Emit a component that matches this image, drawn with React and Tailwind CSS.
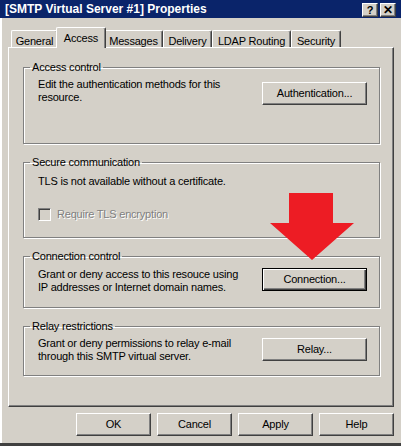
import React from 'react';

const btn3d =
  'border border-t-white border-l-white border-r-[#404040] border-b-[#404040] shadow-[inset_-1px_-1px_0_#808080] bg-[#d4d0c8]';

const tabs = [
  { label: 'General', w: 'w-[47px]' },
  { label: 'Access', w: 'w-[50px]', active: true },
  { label: 'Messages', w: 'w-[59px]' },
  { label: 'Delivery', w: 'w-[49px]' },
  { label: 'LDAP Routing', w: 'w-[79px]' },
  { label: 'Security', w: 'w-[50px]' },
];

const Group = ({ title, className, children }) => (
  <fieldset
    className={`border border-[#808080] pl-[6px] pr-[12px] shadow-[1px_1px_0_#fff,inset_1px_1px_0_#fff] ${className}`}
  >
    <legend className="px-[2px] leading-[13px]">{title}</legend>
    {children}
  </fieldset>
);

const Button = ({ children, className = '', isDefault }) => (
  <button
    className={`h-[23px] flex items-center justify-center bg-[#d4d0c8] text-black ${
      isDefault
        ? 'border border-black shadow-[inset_1px_1px_0_#fff,inset_-1px_-1px_0_#404040,inset_-2px_-2px_0_#808080]'
        : btn3d
    } ${className}`}
  >
    {children}
  </button>
);

export default function App() {
  return (
    <div className="relative w-[401px] h-[446px] bg-[#d4d0c8] flex flex-col font-['Liberation_Sans',Arial,sans-serif] text-[11px] tracking-[-0.2px] text-black overflow-hidden">
      {/* title bar */}
      <div className="h-[18px] bg-[#0a246a] flex items-center justify-between pl-[5px] pr-[5px]">
        <span className="text-white font-bold text-[12px] tracking-normal">
          [SMTP Virtual Server #1] Properties
        </span>
        <div className="flex gap-[2px] mt-[2px]">
          <span className={`w-[16px] h-[14px] flex items-center justify-center font-bold text-[11px] leading-none ${btn3d}`}>?</span>
          <span className={`w-[16px] h-[14px] flex items-center justify-center font-bold text-[12px] leading-none ${btn3d}`}>✕</span>
        </div>
      </div>

      <div className="flex-1 flex flex-col border-l-2 border-l-white">
        {/* tabs */}
        <div className="flex items-end pl-[9px] mt-[9px] h-[20px]">
          {tabs.map((t) =>
            t.active ? (
              <div
                key={t.label}
                className={`${t.w} -mx-[2px] h-[21px] -mb-[1px] relative z-10 bg-[#d4d0c8] border-t border-l border-t-white border-l-white border-r border-r-[#404040] shadow-[inset_-1px_0_0_#808080] rounded-tl-[2px] rounded-tr-[2px] flex justify-center pt-[2px]`}
              >
                {t.label}
              </div>
            ) : (
              <div
                key={t.label}
                className={`${t.w} h-[17px] border-t border-l border-t-white border-l-white border-r border-r-[#404040] shadow-[inset_-1px_0_0_#808080] rounded-tl-[2px] rounded-tr-[2px] flex justify-center pt-[2px]`}
              >
                {t.label}
              </div>
            )
          )}
        </div>

        {/* panel */}
        <div className={`ml-[6px] mr-[7px] h-[360px] flex flex-col gap-[12px] pt-[13px] pl-[14px] pr-[13px] ${btn3d}`}>
          <Group title="Access control" className="h-[83px]">
            <div className="flex justify-between items-start pl-[8px] pt-[4px]">
              <p className="leading-[13px]">
                Edit the authentication methods for this
                <br />
                resource.
              </p>
              <Button className="w-[105px] h-[22px] mt-[4px]">Authentication...</Button>
            </div>
          </Group>

          <Group title="Secure communication" className="h-[82px]">
            <div className="pl-[8px] pt-[6px] flex flex-col">
              <p className="leading-[13px]">TLS is not available without a certificate.</p>
              <label className="flex items-center gap-[6px] mt-[18px]">
                <span className="w-[13px] h-[13px] border border-t-[#808080] border-l-[#808080] border-r-white border-b-white shadow-[inset_1px_1px_0_#404040] bg-[#d4d0c8]" />
                <span className="text-[#808080] [text-shadow:1px_1px_0_#fff]">Require TLS encryption</span>
              </label>
            </div>
          </Group>

          <Group title="Connection control" className="h-[58px]">
            <div className="flex justify-between items-start pl-[8px] pt-[5px]">
              <p className="leading-[13px]">
                Grant or deny access to this resouce using
                <br />
                IP addresses or Internet domain names.
              </p>
              <Button className="w-[105px]" isDefault>
                Connection...
              </Button>
            </div>
          </Group>

          <Group title="Relay restrictions" className="h-[56px]">
            <div className="flex justify-between items-start pl-[8px] pt-[4px]">
              <p className="leading-[13px]">
                Grant or deny permissions to relay e-mail
                <br />
                through this SMTP virtual server.
              </p>
              <Button className="w-[105px] mt-[1px]">Relay...</Button>
            </div>
          </Group>
        </div>

        {/* dialog buttons */}
        <div className="flex justify-end gap-[6px] mt-[6px] pr-[7px]">
          <Button className="w-[75px]">OK</Button>
          <Button className="w-[75px]">Cancel</Button>
          <Button className="w-[75px]">Apply</Button>
          <Button className="w-[75px]">Help</Button>
        </div>
      </div>
      <div className="h-[3px] bg-[#404040]" />

      {/* red arrow annotation */}
      <svg
        className="absolute left-[270px] top-[193px]"
        width="84"
        height="67"
        viewBox="0 0 84 67"
      >
        <polygon points="19,0 63,0 63,30 84,30 42,67 0,30 19,30" fill="#ed1c24" />
      </svg>
    </div>
  );
}
